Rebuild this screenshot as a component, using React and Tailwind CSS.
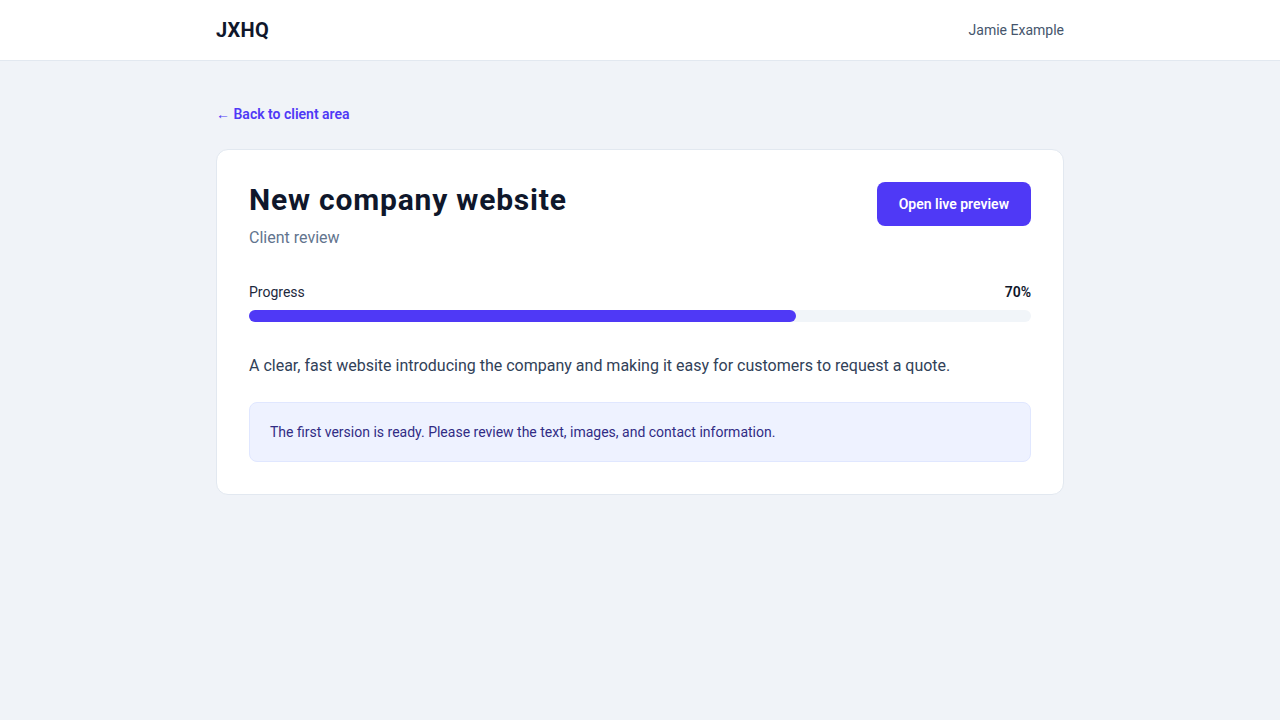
export default function App() {
  return (
    <div className="min-h-screen bg-[#f0f3f8] font-['Roboto',sans-serif] text-slate-900">
      <header className="h-[61px] border-b border-slate-200 bg-white">
        <div className="mx-auto flex h-full max-w-[848px] items-center justify-between">
          <div className="text-xl font-bold tracking-[0.3px] text-slate-900">JXHQ</div>
          <div className="text-sm text-slate-600">Jamie Example</div>
        </div>
      </header>
      <main className="mx-auto max-w-[848px] pt-[43px]">
        <div className="text-sm leading-5">
          <a href="#" className="font-semibold text-[#4f39f6]">← Back to client area</a>
        </div>
        <div className="mt-[25px] rounded-xl border border-slate-200 bg-white p-8">
          <div className="flex items-start justify-between">
            <div>
              <h1 className="text-3xl font-bold leading-9 tracking-[0.8px] text-slate-900">New company website</h1>
              <p className="mt-2 text-base text-slate-500">Client review</p>
            </div>
            <button className="h-11 rounded-lg bg-[#4f39f6] px-[22px] text-sm font-semibold text-white">Open live preview</button>
          </div>
          <div className="mt-8">
            <div className="flex items-center justify-between text-sm">
              <span className="text-slate-800">Progress</span>
              <span className="font-semibold text-slate-900">70%</span>
            </div>
            <div className="mt-2 h-3 w-full rounded-full bg-slate-100">
              <div className="h-3 rounded-full bg-[#4f39f6]" style={{ width: "70%" }} />
            </div>
          </div>
          <p className="mt-8 text-base text-slate-700">A clear, fast website introducing the company and making it easy for customers to request a quote.</p>
          <div className="mt-6 rounded-lg border border-indigo-100 bg-[#eef2ff] px-5 py-[19px] text-sm leading-5 text-indigo-900">
            The first version is ready. Please review the text, images, and contact information.
          </div>
        </div>
      </main>
    </div>
  );
}
